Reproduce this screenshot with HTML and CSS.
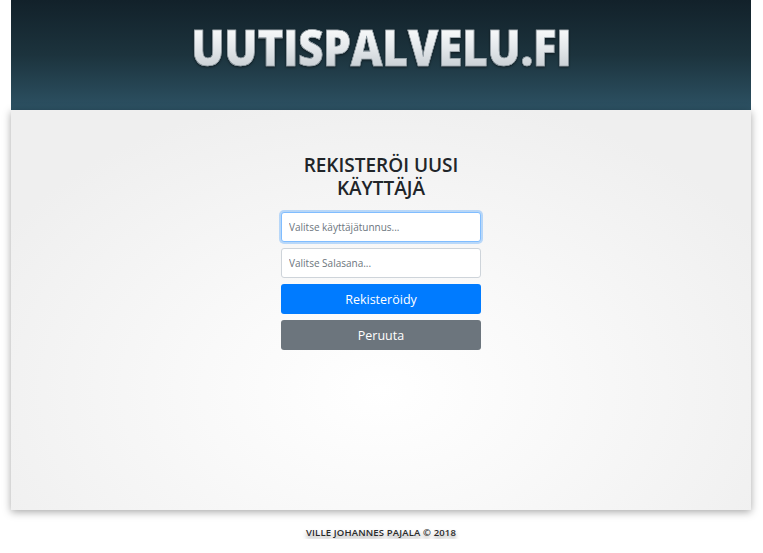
FILE: index.html
```html
<!DOCTYPE html>
<html lang="fi">
<head>
<meta charset="utf-8">
<title>Uutispalvelu.fi</title>
<link rel="stylesheet" href="styles.css">
</head>
<body>
<div class="page">
  <header class="header">
    <h1 class="logo">UUTISPALVELU.FI</h1>
  </header>
  <main class="panel">
    <form class="register">
      <h2 class="register-title">REKISTERÖI UUSI KÄYTTÄJÄ</h2>
      <div class="register-fields">
        <input class="field field-focus" type="text" placeholder="Valitse käyttäjätunnus...">
        <input class="field" type="password" placeholder="Valitse Salasana...">
        <button class="btn btn-primary" type="button">Rekisteröidy</button>
        <button class="btn btn-secondary" type="button">Peruuta</button>
      </div>
    </form>
  </main>
  <footer class="footer">VILLE JOHANNES PAJALA © 2018</footer>
</div>
</body>
</html>
```
FILE: styles.css
```css
* { box-sizing: border-box; }
html, body { margin: 0; padding: 0; background: #ffffff; }
body { font-family: "Open Sans", "Noto Sans", sans-serif; color: #212529; }
.page { margin: 0 12px 0 11px; }
.header {
  height: 110px;
  background: linear-gradient(to bottom, #12212a 0%, #1c333d 50%, #2d5264 100%);
  display: flex;
  align-items: center;
  justify-content: center;
  padding-bottom: 16px;
}
.logo {
  margin: 0;
  font-family: "Open Sans", sans-serif;
  font-weight: 800;
  font-size: 49px;
  letter-spacing: -0.5px;
  line-height: 1;
  background: linear-gradient(to bottom, #ffffff 0%, #e4e8eb 50%, #c3cacf 100%);
  -webkit-background-clip: text;
  background-clip: text;
  color: transparent;
  -webkit-text-stroke: 0.6px #7d8a92;
  filter: drop-shadow(0 1px 1px rgba(0,0,0,0.5));
  transform: scaleX(0.905);
}
.panel {
  height: 400px;
  background: radial-gradient(ellipse 60% 75% at 50% 70%, #ffffff 0%, #f9f9f9 40%, #efefef 100%);
  box-shadow: 0 2px 8px rgba(0,0,0,0.35);
  display: flex;
  justify-content: center;
  padding-top: 44px;
}
.register {
  width: 200px;
  display: flex;
  flex-direction: column;
}
.register-title {
  margin: 0 -10px 12px;
  font-size: 19px;
  font-weight: 600;
  line-height: 23px;
  text-align: center;
  color: #212529;
}
.register-fields {
  display: flex;
  flex-direction: column;
  gap: 6px;
}
.field {
  height: 30px;
  width: 100%;
  padding: 0 7px;
  border: 1px solid #ced4da;
  border-radius: 3px;
  background: #ffffff;
  font-family: "Open Sans", sans-serif;
  font-size: 10px;
  color: #495057;
  outline: none;
}
.field::placeholder { color: #6c757d; }
.field-focus {
  border-color: #80bdff;
  box-shadow: 0 0 0 2px rgba(0,123,255,0.25);
}
.btn {
  height: 30px;
  width: 100%;
  border: none;
  border-radius: 3px;
  color: #ffffff;
  font-family: "Open Sans", sans-serif;
  font-size: 12.5px;
  cursor: pointer;
}
.btn-primary { background: #007bff; }
.btn-secondary { background: #6c757d; }
.footer {
  text-align: center;
  padding-top: 16px;
  font-size: 9.5px;
  font-weight: 600;
  letter-spacing: 0.15px;
  color: #2a2a2a;
  text-shadow: 0 3px 4px rgba(0,0,0,0.45);
}
```
